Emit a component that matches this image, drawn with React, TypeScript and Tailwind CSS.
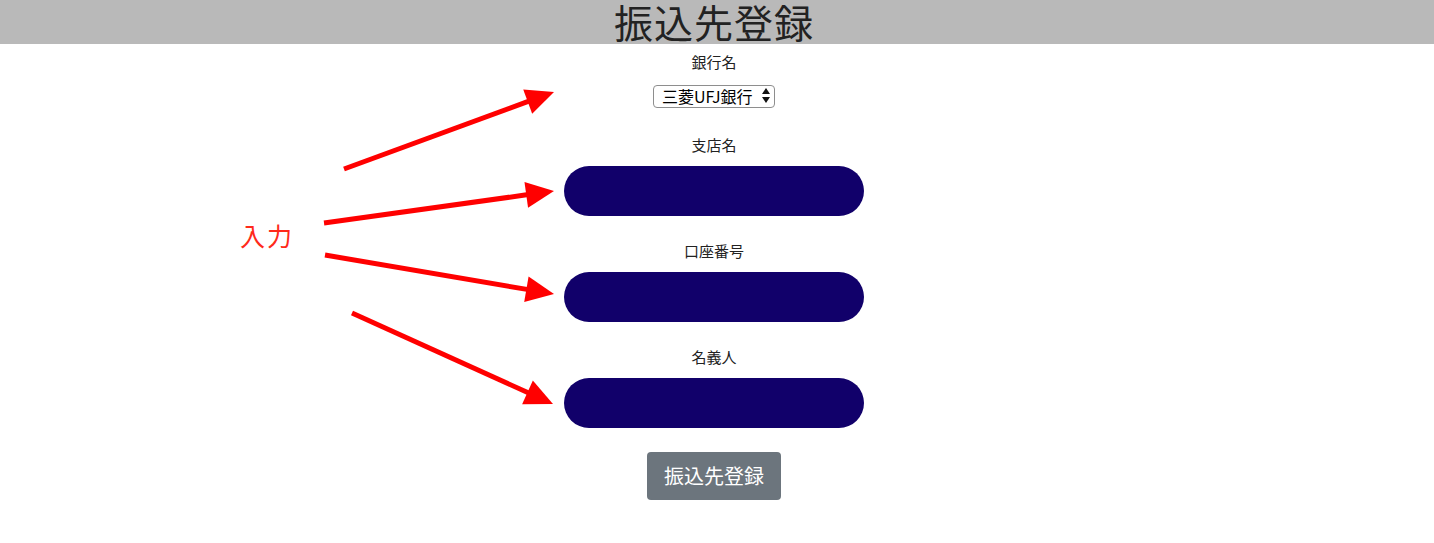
import React from "react";

const font = { fontFamily: '"Noto Sans CJK JP", "Noto Sans", sans-serif' };

function Arrow({ x1, y1, x2, y2 }: { x1: number; y1: number; x2: number; y2: number }) {
  const dx = x2 - x1;
  const dy = y2 - y1;
  const len = Math.hypot(dx, dy);
  const ux = dx / len;
  const uy = dy / len;
  const hl = 28;
  const hw = 13;
  const bx = x2 - ux * hl;
  const by = y2 - uy * hl;
  const px = -uy;
  const py = ux;
  const pts = `${x2},${y2} ${bx + px * hw},${by + py * hw} ${bx - px * hw},${by - py * hw}`;
  return (
    <g>
      <line x1={x1} y1={y1} x2={bx + ux * 2} y2={by + uy * 2} stroke="#ff0000" strokeWidth={5} />
      <polygon points={pts} fill="#ff0000" />
    </g>
  );
}

function Field({ label }: { label: string }) {
  return (
    <div className="flex flex-col items-center">
      <div className="text-[15px] leading-[20px] text-[#222] mb-[11px]">{label}</div>
      <input className="w-[300px] h-[50px] rounded-full bg-[#11006a] outline-none border-0" />
    </div>
  );
}

export default function App() {
  return (
    <div className="relative w-[1434px] h-[543px] bg-white overflow-hidden" style={font}>
      <div className="h-[44px] bg-[#b9b9b9] flex items-start justify-center pr-[6px]">
        <h1 className="text-[39px] leading-[42px] text-[#222] tracking-[1px]">振込先登録</h1>
      </div>
      <div className="flex flex-col items-center pr-[6px]">
        <div className="mt-[8px] text-[15px] leading-[20px] text-[#222]">銀行名</div>
        <div className="relative mt-[12px]">
          <select className="appearance-none w-[122px] h-[23px] border border-[#8e8e8e] rounded-[4px] bg-white pl-[8px] text-[16px] leading-[20px] text-black outline-none">
            <option>三菱UFJ銀行</option>
          </select>
          <svg className="absolute right-[5px] top-[4px] pointer-events-none" width="8" height="15" viewBox="0 0 8 15">
            <polygon points="4,0 8,6 0,6" fill="#111" />
            <polygon points="0,9 8,9 4,15" fill="#111" />
          </svg>
        </div>
        <div className="mt-[27px] flex flex-col gap-[25px]">
          <Field label="支店名" />
          <Field label="口座番号" />
          <Field label="名義人" />
        </div>
        <button className="mt-[24px] w-[134px] h-[48px] rounded-[4px] bg-[#6c757d] text-white text-[20px]">
          振込先登録
        </button>
      </div>
      <div className="absolute left-[240px] top-[218px] text-[25px] leading-[34px] text-[#ff2a1a] tracking-[2px]">入力</div>
      <svg className="absolute left-0 top-0 pointer-events-none" width="1434" height="543">
        <Arrow x1={344} y1={169} x2={554} y2={92} />
        <Arrow x1={324} y1={223} x2={554} y2={191} />
        <Arrow x1={325} y1={255} x2={554} y2={294} />
        <Arrow x1={352} y1={313} x2={553} y2={404} />
      </svg>
    </div>
  );
}
